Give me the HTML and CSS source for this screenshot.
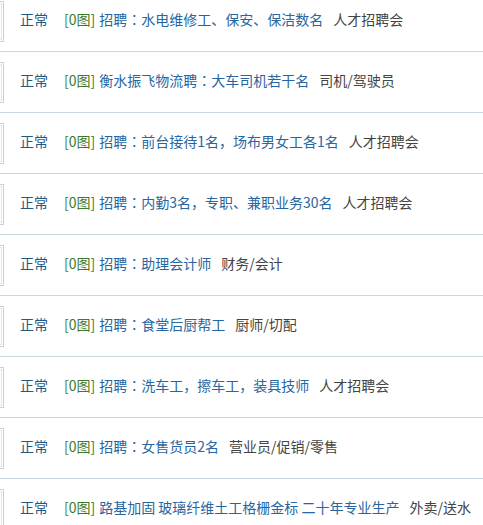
FILE: index.html
```html
<!DOCTYPE html>
<html lang="zh-CN">
<head>
<meta charset="utf-8">
<title>招聘列表</title>
<link rel="stylesheet" href="styles.css">
</head>
<body>
<ul class="list">
  <li class="row"><span class="thumb"><span class="thumb-inner"></span></span><span class="status">正常</span><span class="pic">[0图]</span> <a class="title" href="#">招聘<span class="colon" lang="zh-TW">：</span>水电维修工、保安、保洁数名</a><span class="cat">人才招聘会</span></li>
  <li class="row"><span class="thumb"><span class="thumb-inner"></span></span><span class="status">正常</span><span class="pic">[0图]</span> <a class="title" href="#">衡水振飞物流聘<span class="colon" lang="zh-TW">：</span>大车司机若干名</a><span class="cat">司机/驾驶员</span></li>
  <li class="row"><span class="thumb"><span class="thumb-inner"></span></span><span class="status">正常</span><span class="pic">[0图]</span> <a class="title" href="#">招聘<span class="colon" lang="zh-TW">：</span>前台接待1名，场布男女工各1名</a><span class="cat">人才招聘会</span></li>
  <li class="row"><span class="thumb"><span class="thumb-inner"></span></span><span class="status">正常</span><span class="pic">[0图]</span> <a class="title" href="#">招聘<span class="colon" lang="zh-TW">：</span>内勤3名，专职、兼职业务30名</a><span class="cat">人才招聘会</span></li>
  <li class="row"><span class="thumb"><span class="thumb-inner"></span></span><span class="status">正常</span><span class="pic">[0图]</span> <a class="title" href="#">招聘<span class="colon" lang="zh-TW">：</span>助理会计师</a><span class="cat">财务/会计</span></li>
  <li class="row"><span class="thumb"><span class="thumb-inner"></span></span><span class="status">正常</span><span class="pic">[0图]</span> <a class="title" href="#">招聘<span class="colon" lang="zh-TW">：</span>食堂后厨帮工</a><span class="cat">厨师/切配</span></li>
  <li class="row"><span class="thumb"><span class="thumb-inner"></span></span><span class="status">正常</span><span class="pic">[0图]</span> <a class="title" href="#">招聘<span class="colon" lang="zh-TW">：</span>洗车工，擦车工，装具技师</a><span class="cat">人才招聘会</span></li>
  <li class="row"><span class="thumb"><span class="thumb-inner"></span></span><span class="status">正常</span><span class="pic">[0图]</span> <a class="title" href="#">招聘<span class="colon" lang="zh-TW">：</span>女售货员2名</a><span class="cat">营业员/促销/零售</span></li>
  <li class="row"><span class="thumb"><span class="thumb-inner"></span></span><span class="status">正常</span><span class="pic">[0图]</span> <a class="title" href="#">路基加固 玻璃纤维土工格栅金标 二十年专业生产</a><span class="cat">外卖/送水</span></li>
</ul>
</body>
</html>
```

FILE: styles.css
```css
html, body {
  margin: 0;
  padding: 0;
  background: #ffffff;
  overflow: hidden;
}

body {
  font-family: "Microsoft YaHei", "Noto Sans CJK SC", "Noto Sans", sans-serif;
  font-size: 14px;
  color: #444;
}

.list {
  list-style: none;
  margin: -9px 0 0 0;
  padding: 0;
}

.row {
  display: flex;
  align-items: center;
  height: 56px;
  padding-bottom: 4px;
  border-bottom: 1px solid #c9d7e1;
  white-space: nowrap;
}

.thumb {
  display: block;
  box-sizing: border-box;
  width: 10px;
  height: 41px;
  margin-left: -6px;
  margin-right: 16px;
  margin-top: 4px;
  border: 1px solid #cfcfcf;
  padding: 1px;
  flex: none;
}

.thumb-inner {
  display: block;
  box-sizing: border-box;
  width: 100%;
  height: 100%;
  border: 1px solid #e6e6e6;
}

.status {
  color: #25587f;
  margin-right: 16px;
}

.pic {
  color: #3c7a28;
}

.title {
  color: #2766a0;
  text-decoration: none;
  margin-left: 4px;
  margin-right: 10px;
}

.colon {
  font-family: "Noto Sans CJK TC", "Noto Sans CJK SC", sans-serif;
}

.cat {
  color: #444;
}
```
